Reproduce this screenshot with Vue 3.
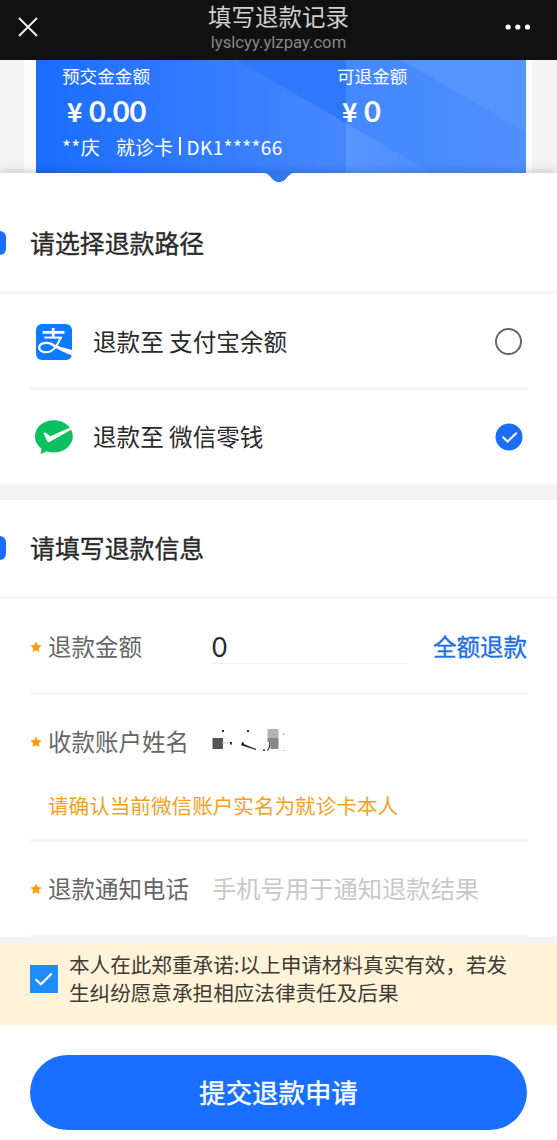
<script setup>
import { ref } from 'vue'

const channel = ref('wechat')
const agreed = ref(true)
</script>

<template>
  <div class="page">
    <header class="nav">
      <svg class="close" width="22" height="22" viewBox="0 0 22 22"><path d="M2 2 20 20M20 2 2 20" /></svg>
      <div class="nav-text">
        <div class="nav-title">填写退款记录</div>
        <div class="nav-url">lyslcyy.ylzpay.com</div>
      </div>
      <svg class="more" width="26" height="6" viewBox="0 0 26 6">
        <circle cx="3.1" cy="3" r="2.6" /><circle cx="12.8" cy="3" r="2.6" /><circle cx="22.5" cy="3" r="2.6" />
      </svg>
    </header>

    <section class="hero">
      <div class="card">
        <svg class="card-art" width="490" height="122" viewBox="0 0 490 122" preserveAspectRatio="none">
          <defs>
            <linearGradient id="base" x1="0" y1="0" x2="1" y2="0">
              <stop offset="0" stop-color="#1b6dff" /><stop offset=".62" stop-color="#4587fe" /><stop offset="1" stop-color="#4d90ff" />
            </linearGradient>
            <linearGradient id="right" x1="0" y1="0" x2="1" y2="0">
              <stop offset="0" stop-color="#4388ff" /><stop offset="1" stop-color="#508fff" />
            </linearGradient>
            <linearGradient id="low" x1="0" y1="0" x2="1" y2="0">
              <stop offset="0" stop-color="#5796ff" /><stop offset="1" stop-color="#4c8dff" />
            </linearGradient>
          </defs>
          <rect width="490" height="122" fill="url(#base)" />
          <path d="M200 0H310V63Z" fill="#2f78fc" />
          <path d="M310 0H490V122H310Z" fill="url(#right)" />
          <path d="M365 0H490V72Z" fill="#5695fd" />
          <path d="M310 63 412 122H310Z" fill="url(#low)" />
        </svg>
        <div class="balances">
          <div class="balance">
            <div class="bal-label">预交金金额</div>
            <div class="bal-value"><span class="yen">¥</span>0.00</div>
          </div>
          <div class="balance">
            <div class="bal-label">可退金额</div>
            <div class="bal-value"><span class="yen">¥</span>0</div>
          </div>
        </div>
        <div class="patient"><span class="who">**庆</span><span>就诊卡</span><i class="bar"></i><span class="cardno">DK1****66</span></div>
      </div>
    </section>

    <main class="sheet">
      <svg class="notch" width="28" height="10" viewBox="0 0 28 10"><path d="M0 0C4 1 6 5 9 7.500Q14 11 19 7.500C22 5 24 1 28 0Z" /></svg>
      <h2 class="heading first"><i class="mark"></i><span>请选择退款路径</span></h2>
      <div class="option lined" @click="channel = 'alipay'">
        <svg class="logo" width="40" height="40" viewBox="0 0 40 40">
          <rect x="2" y="2" width="36" height="36" rx="6" fill="#0b7cff" />
          <g fill="none" stroke="#fff">
            <path d="M19.200 6V15.500M8.500 10.300H30.500" stroke-width="2.800" />
            <path d="M10.500 15.600H28" stroke-width="2" />
            <path d="M26.600 15.300C24.500 22 19.500 30.300 12.200 30.300C6 30.300 3.900 26.300 6 23.200C8.800 19.800 15 20.500 20 23" stroke-width="2.100" />
          </g>
          <path d="M16 20.800Q27 25.800 38 28V33.500Q29 30.500 16 22.800Z" fill="#fff" />
        </svg>
        <span class="option-name">退款至 支付宝余额</span>
        <i v-if="channel !== 'alipay'" class="radio"></i>
      </div>
      <div class="option" @click="channel = 'wechat'">
        <svg class="logo" width="40" height="40" viewBox="0 0 40 40">
          <path d="M19.800 3.200C30.500 3.200 38.800 10.300 38.800 19.300S30.500 35.500 19.800 35.500C17 35.500 14.500 35.100 12.300 34.200L6.700 37.200L7.500 31.700C3.500 28.700 1 24.400 1 19.300C1 10.300 9 3.200 19.800 3.200Z" fill="#0bc15f" />
          <path d="M9.400 16.300Q10 14.800 11.700 15.800L16.500 19.200L35.500 10.800L37.200 12.700L15.800 24.800Q14 25.900 13.200 24Z" fill="#fff" />
        </svg>
        <span class="option-name">退款至 微信零钱</span>
        <svg v-if="channel === 'wechat'" class="picked" width="28" height="28" viewBox="0 0 28 28">
          <circle cx="14" cy="14" r="13.500" fill="#1b6efa" /><path d="M7.500 13.700 12.600 18.500 21.700 9.700" fill="none" stroke="#fff" stroke-width="2" />
        </svg>
      </div>

      <div class="gap"></div>

      <h2 class="heading"><i class="mark"></i><span>请填写退款信息</span></h2>
      <div class="field amount">
        <svg class="star" width="12" height="12" viewBox="0 0 12 12"><path d="M6 .5 7.700 4 11.500 4.500 8.800 7.200 9.400 11 6 9.200 2.600 11 3.200 7.200 .5 4.500 4.300 4Z" /></svg>
        <label>退款金额</label>
        <div class="amount-box">0</div>
        <a class="all">全额退款</a>
      </div>
      <div class="named">
        <div class="field">
          <svg class="star" width="12" height="12" viewBox="0 0 12 12"><path d="M6 .5 7.700 4 11.500 4.500 8.800 7.200 9.400 11 6 9.200 2.600 11 3.200 7.200 .5 4.500 4.300 4Z" /></svg>
          <label>收款账户姓名</label>
          <svg class="masked" width="76" height="26" viewBox="0 0 76 26">
            <path d="M.5 9H11V20H.5Z" fill="#555" /><path d="M10 13.500H18V14.300H10Z" fill="#bbb" />
            <path d="M10 1H12V3H10ZM18 13H20V15.500H18ZM35 1H37V3H35ZM51 20.500H53V22H51Z" fill="#333" />
            <path d="M30.500 13 32 15.500 44 20.500 29.500 16Z" fill="#222" stroke="#222" stroke-width=".8" /><path d="M55.500 0H66.500V9H55.500Z" fill="#b2b2b2" />
            <path d="M55.500 9H66.500V20H58.500V13H55.500Z" fill="#888" />
            <path d="M57.800 13Q58 19 55.500 21.500" fill="none" stroke="#333" stroke-width="1.200" />
            <path d="M71 4H72.500V6H71ZM71 21H72.500V22H71Z" fill="#bbb" />
          </svg>
        </div>
        <p class="warn">请确认当前微信账户实名为就诊卡本人</p>
      </div>
      <div class="field phone">
        <svg class="star" width="12" height="12" viewBox="0 0 12 12"><path d="M6 .5 7.700 4 11.500 4.500 8.800 7.200 9.400 11 6 9.200 2.600 11 3.200 7.200 .5 4.500 4.300 4Z" /></svg>
        <label>退款通知电话</label>
        <span class="placeholder">手机号用于通知退款结果</span>
      </div>
    </main>

    <div class="consent" @click="agreed = !agreed">
      <svg class="check" width="28" height="28" viewBox="0 0 28 28">
        <rect width="28" height="28" fill="#1f8cfb" /><path v-if="agreed" d="M5.500 14.200 11 19.200 21.700 8.500" fill="none" stroke="#fff" stroke-width="2.200" />
      </svg>
      <p>本人在此郑重承诺:以上申请材料真实有效，若发<br />生纠纷愿意承担相应法律责任及后果</p>
    </div>

    <footer class="foot"><button class="submit">提交退款申请</button></footer>
  </div>
</template>

<style>
body { background: #fff; overflow: hidden; }
</style>

<style scoped>
* { box-sizing: border-box; }
.page { width: 557px; height: 1140px; overflow: hidden; background: #fff; color: #2a2a2a; font-family: "Noto Sans CJK SC", sans-serif; white-space: nowrap; }
svg { display: block; flex: none; }
i { flex: none; }

.nav { position: relative; height: 60px; background: #111; }
.close { position: absolute; left: 17px; top: 16px; fill: none; stroke: #f2f2f2; stroke-width: 1.900; }
.more { position: absolute; left: 505px; top: 24px; fill: #fff; }
.nav-text { text-align: center; padding-top: 2px; }
.nav-title { font-size: 23.500px; line-height: 28px; color: #cfcfcf; }
.nav-url { font-family: Roboto, sans-serif; font-size: 16.700px; line-height: 20px; color: #868686; margin-top: 3px; }

.hero { height: 113px; padding: 0 25px 0 24px; background: #f4f4f4; }
.card { position: relative; height: 122px; margin: 0; border: solid #fcfcfc; border-width: 0 6px 0 12px; padding: 4px 0 0 26px; color: #fff; }
.card-art { position: absolute; left: 0; top: 0; }
.balances { position: relative; display: grid; grid-template-columns: 275px 1fr; }
.bal-label { font-size: 17.600px; line-height: 24px; }
.bal-value { display: flex; align-items: center; height: 46px; padding-left: 5px; font-family: Lato, sans-serif; font-weight: 700; font-size: 29px; line-height: 44px; }
.yen { width: 22px; font-size: 26px; font-weight: 700; font-family: "Noto Sans CJK SC", sans-serif; }
.patient { position: relative; display: flex; align-items: center; height: 26px; margin-top: -1px; font-size: 19px; }
.who { width: 54px; letter-spacing: .5px; }
.bar { width: 1.500px; height: 18px; margin: 0 6px 0 6px; background: #fff; }
.cardno { letter-spacing: .4px; }

.sheet { position: relative; background: #fff; box-shadow: 0 -3px 8px rgba(0, 0, 0, .15); }
.notch { position: absolute; left: 265px; top: 0; fill: #3078ed; }
.heading { display: flex; align-items: center; height: 99px; margin: 0; border-bottom: 3px solid #f5f5f5; font-size: 24.900px; font-weight: 400; -webkit-text-stroke: .35px #2a2a2a; }
.heading.first { height: 121px; padding-top: 22px; }
.heading span, .field label, .placeholder, .all { padding-bottom: 2px; }
.mark { width: 6px; height: 24px; margin-right: 24px; border-radius: 0 6px 6px 0; background: #1a6fff; }
.option { display: flex; align-items: center; height: 94px; margin: 0 29px; padding: 0 5px; }
.option.lined { height: 96px; padding-top: 2px; border-bottom: 3px solid #f5f5f5; }
.option-name { margin-left: 19px; flex: 1; font-size: 23.600px; padding-bottom: 2px; }
.radio { width: 27px; height: 27px; margin-right: 1px; border: 2px solid #666; border-radius: 50%; }
.gap { height: 16px; background: #f4f4f4; border-top: 2px solid #f8f8f8; }

.field { display: flex; align-items: center; height: 96px; margin: 0 29px 0 30px; font-size: 23.500px; }
.star { fill: #ff9c0b; }
.field label { width: 164px; margin-left: 6px; color: #666; }
.amount { padding-top: 2px; border-bottom: 3px solid #f5f5f5; }
.amount-box { width: 196px; height: 33px; margin-top: 1px; line-height: 33px; border-bottom: 1px solid #f1f1f1; font-family: Lato, sans-serif; font-size: 26px; }
.all { margin-left: auto; margin-right: 1px; color: #1d6fe5; -webkit-text-stroke: .35px #1d6fe5; }
.named { height: 147px; margin: 0 29px 0 30px; border-bottom: 3px solid #f5f5f5; }
.named .field { margin: 0; height: 94px; }
.warn { margin: 1px 0 0 18px; font-size: 20.600px; line-height: 30px; color: #f6a01e; }
.phone { height: 95px; border-bottom: 2px solid #f5f5f5; }
.placeholder { font-size: 24.300px; color: #c8c8ca; }

.consent { position: relative; display: flex; height: 88px; padding: 13px 0 0 30px; background: #fff4da; border-top: 6px solid #f4f4f4; }
.check { margin-top: 9px; }
.consent p { margin: -6px 0 0 11px; font-size: 20.600px; line-height: 28px; color: #403a32; }
.foot { padding: 30px 30px 0; }
.submit { width: 497px; height: 75px; padding: 0 0 2px; border: 0; border-radius: 38px; background: #196fff; color: #fff; font-family: inherit; font-size: 26.400px; -webkit-text-stroke: .4px #fff; }
</style>
